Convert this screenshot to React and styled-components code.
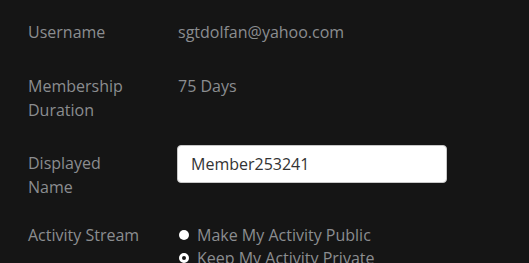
import styled, { createGlobalStyle } from 'styled-components';

const GlobalStyle = createGlobalStyle`
    html, body {
        margin: 0;
        padding: 0;
        background: #151515;
    }

    body {
        font-family: "Open Sans", "Liberation Sans", sans-serif;
        font-size: 16px;
        line-height: 24px;
        color: #8b8d90;
    }
`

const Form = styled.form`
    padding: 20px 0 0 28px;
`

const Row = styled.div`
    display: grid;
    grid-template-columns: 150px 1fr;
    align-items: start;
    margin-bottom: ${props => props.$gap}px;
`

const Label = styled.div`
    width: 120px;
    padding-top: ${props => props.$offset || 0}px;
`

const Value = styled.div`
    margin: 0;
`

const TextInput = styled.input`
    box-sizing: border-box;
    width: 270px;
    height: 38px;
    margin-left: -1px;
    padding: 0 13px;
    border: 1px solid #c8c8c8;
    border-radius: 4px;
    background: #fff;
    font-family: inherit;
    font-size: 16px;
    color: #333;
    outline: none;
`

const RadioList = styled.div`
    display: flex;
    flex-direction: column;
    margin-left: 1px;
`

const RadioOption = styled.label`
    display: flex;
    align-items: center;
    gap: 8px;
    height: 23px;
`

const Dot = styled.span`
    box-sizing: border-box;
    flex: none;
    width: 10px;
    height: 10px;
    border-radius: 50%;
    background: ${props => props.$checked ? '#151515' : '#fff'};
    border: ${props => props.$checked ? '3px solid #fff' : 'none'};
`

function App() {
    return (
        <>
            <GlobalStyle />
            <Form>
                <Row $gap={30}>
                    <Label>Username</Label>
                    <Value>sgtdolfan@yahoo.com</Value>
                </Row>
                <Row $gap={23}>
                    <Label>Membership Duration</Label>
                    <Value>75 Days</Value>
                </Row>
                <Row $gap={24}>
                    <Label $offset={6}>Displayed Name</Label>
                    <TextInput type="text" defaultValue="Member253241" />
                </Row>
                <Row $gap={0}>
                    <Label>Activity Stream</Label>
                    <RadioList>
                        <RadioOption>
                            <Dot />
                            Make My Activity Public
                        </RadioOption>
                        <RadioOption>
                            <Dot $checked />
                            Keep My Activity Private
                        </RadioOption>
                    </RadioList>
                </Row>
            </Form>
        </>
    );
};

export default App;
